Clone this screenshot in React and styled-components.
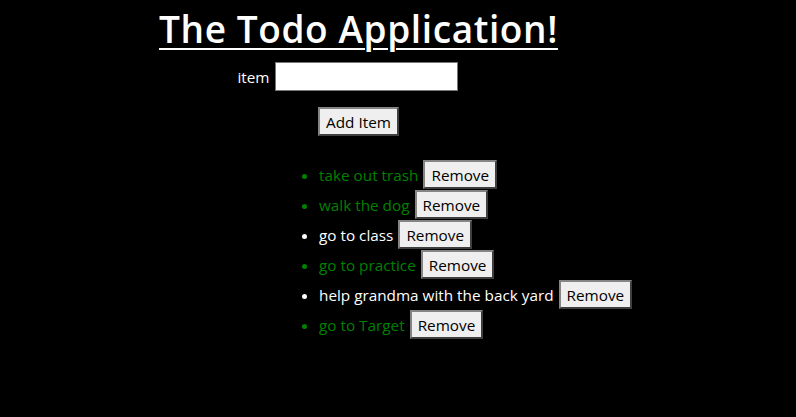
import React, { useState } from "react";
import styled, { createGlobalStyle } from "styled-components";

const Global = createGlobalStyle`
  html, body { margin: 0; padding: 0; background: #000; }
  body { font-family: "Open Sans", "Noto Sans", sans-serif; color: #fff; }
`;

const Page = styled.div`
  width: 701px;
  padding: 0 8px;
  display: flex;
  flex-direction: column;
  align-items: center;
`;

const Title = styled.h1`
  margin: 0;
  padding-top: 4px;
  height: 50px;
  box-sizing: border-box;
  font-size: 37px;
  line-height: 50px;
  font-weight: 600;
  letter-spacing: 0.6px;
  text-decoration: underline;
  text-decoration-thickness: 2px;
  text-underline-offset: 5px;
`;

const FormRow = styled.div`
  display: flex;
  align-items: center;
  gap: 5px;
  margin-top: 12px;
  margin-right: 22px;
  font-size: 15.3px;
`;

const Input = styled.input`
  box-sizing: border-box;
  width: 183px;
  height: 29px;
  border: 1px solid #767676;
  background: #fff;
  font: inherit;
  padding: 0 4px;
`;

const Button = styled.button`
  box-sizing: border-box;
  height: 29px;
  padding: 0 6px;
  font-family: inherit;
  font-size: 15.3px;
  color: #000;
  background: #efefef;
  border: 2px solid;
  border-color: #858585 #3f3f3f #3f3f3f #858585;
  margin-left: ${(p) => p.$gap || 0}px;
  margin-top: ${(p) => p.$top || 0}px;
  cursor: pointer;
`;

const List = styled.ul`
  align-self: flex-start;
  margin: 24px 0 0 271px;
  padding-left: 40px;
  font-size: 15.3px;
`;

const Item = styled.li`
  height: 30px;
  color: ${(p) => (p.$done ? "#008000" : "#fff")};
`;

const Row = styled.span`
  display: inline-flex;
  align-items: center;
  height: 30px;
  padding-bottom: 1px;
  box-sizing: border-box;
`;

const initial = [
  { text: "take out trash", done: true },
  { text: "walk the dog", done: true },
  { text: "go to class", done: false },
  { text: "go to practice", done: true },
  { text: "help grandma with the back yard", done: false },
  { text: "go to Target", done: true },
];

export default function App() {
  const [items, setItems] = useState(initial);
  const [value, setValue] = useState("");
  return (
    <>
      <Global />
      <Page>
        <Title>The Todo Application!</Title>
        <FormRow>
          <span>item</span>
          <Input value={value} onChange={(e) => setValue(e.target.value)} />
        </FormRow>
        <Button
          $top={16}
          onClick={() => {
            if (value.trim()) {
              setItems([...items, { text: value, done: false }]);
              setValue("");
            }
          }}
        >
          Add Item
        </Button>
        <List>
          {items.map((it, i) => (
            <Item key={i} $done={it.done}>
              <Row>
                {it.text}
                <Button $gap={5} onClick={() => setItems(items.filter((_, j) => j !== i))}>
                  Remove
                </Button>
              </Row>
            </Item>
          ))}
        </List>
      </Page>
    </>
  );
}
